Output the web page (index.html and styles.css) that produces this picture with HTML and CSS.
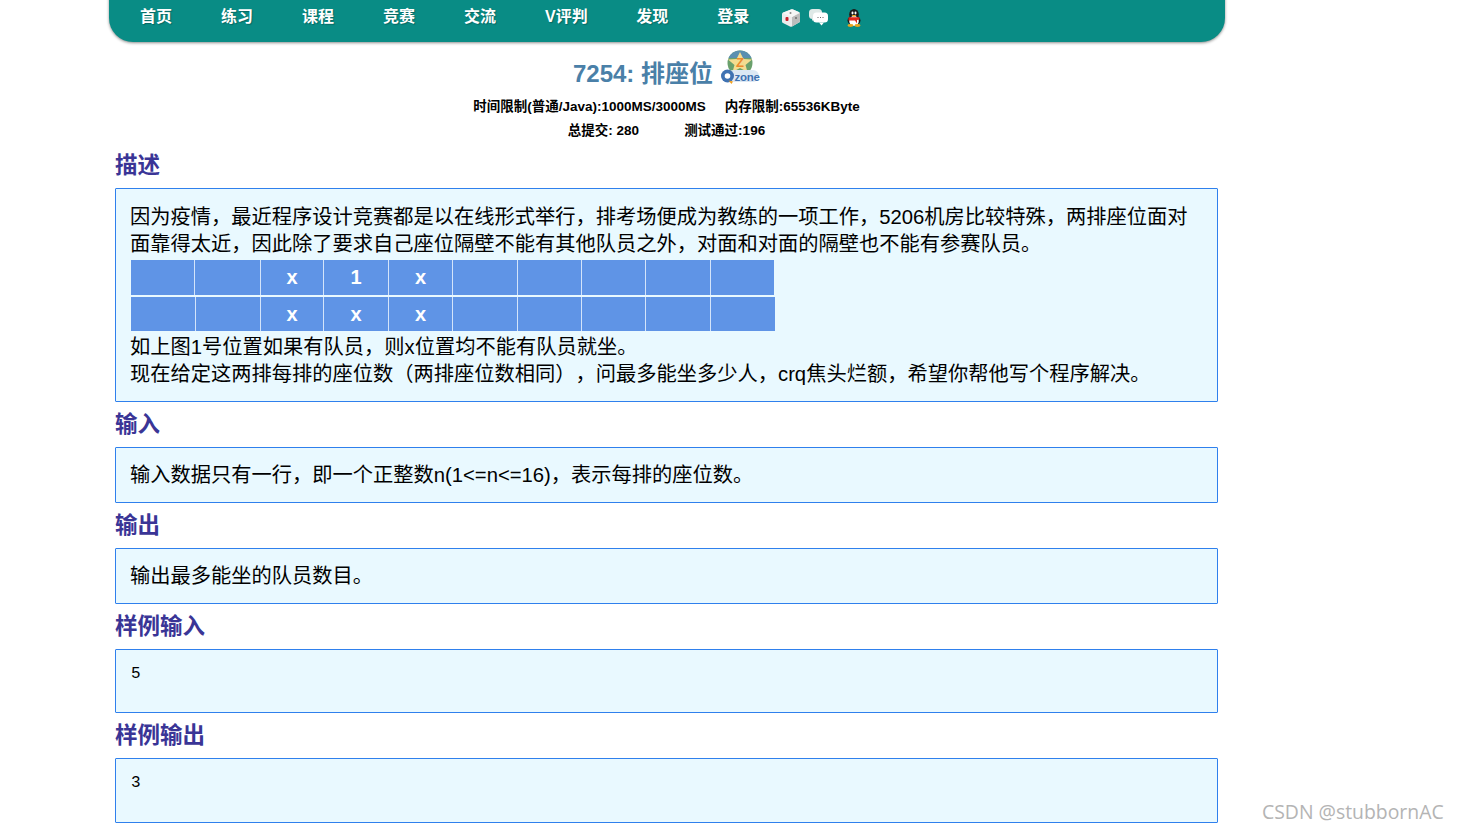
FILE: index.html
```html
<!DOCTYPE html>
<html lang="zh">
<head>
<meta charset="utf-8">
<title>7254: 排座位</title>
<link rel="stylesheet" href="styles.css">
</head>
<body>
<nav class="nav">
  <a class="nav-item">首页</a>
  <a class="nav-item">练习</a>
  <a class="nav-item">课程</a>
  <a class="nav-item">竞赛</a>
  <a class="nav-item">交流</a>
  <a class="nav-item nav-item-v">V评判</a>
  <a class="nav-item">发现</a>
  <a class="nav-item">登录</a>
  <span class="nav-icons">
    <svg class="ico" width="19" height="18" viewBox="0 0 19 18">
      <path d="M1 5 Q1 4 2 3.500L10 .5Q11 0 12 .5L18 3Q19 3.500 19 5V12Q19 13 18 13.500L11 17.500Q10 18 9 17.500L2 14Q1 13.500 1 12.500Z" fill="#ececec"/>
      <path d="M11 8 L19 4V12Q19 13 18 13.500L11 17.500Z" fill="#bdbdbd"/>
      <path d="M1.500 4 10 .5Q11 0 12 .5L18.500 3.500 11 8Z" fill="#f6f6f6"/>
      <rect x="4.500" y="8" width="3" height="4" rx="1" fill="#c8202a"/>
      <circle cx="9.500" cy="4" r="1" fill="#8a8a8a"/>
      <circle cx="15" cy="9" r="1" fill="#707070"/>
    </svg>
    <svg class="ico ico-chat" width="19" height="17" viewBox="0 0 19 17">
      <rect x="0" y="0" width="13" height="10" rx="3.500" fill="#dfe9e7"/>
      <path d="M3 9v3l3-3z" fill="#dfe9e7"/>
      <rect x="4" y="3.500" width="15" height="10" rx="3.500" fill="#fff"/>
      <path d="M10 13.500l2.500 3 2.500-3z" fill="#fff"/>
      <path d="M8.500 8.500h1M11 8.500h1M13.500 8.500h1" stroke="#666" stroke-width="1"/>
    </svg>
    <svg class="ico ico-qq" width="16" height="18" viewBox="0 0 16 18">
      <ellipse cx="8" cy="5.500" rx="4.800" ry="5.500" fill="#1a1a1a"/>
      <ellipse cx="8" cy="11.500" rx="6.500" ry="5" fill="#1a1a1a"/>
      <ellipse cx="8" cy="12" rx="4.800" ry="5" fill="#fff"/>
      <ellipse cx="6.500" cy="4" rx="1" ry="1.400" fill="#fff"/>
      <ellipse cx="9.500" cy="4" rx="1" ry="1.400" fill="#fff"/>
      <path d="M5.500 6h5L8 8z" fill="#f2a81d"/>
      <path d="M2.500 8.200h11v2.300l-2.500.5v3.500L9 11.500H2.500z" fill="#e1271c"/>
      <ellipse cx="4.500" cy="16.500" rx="3" ry="1.400" fill="#e9a51e"/>
      <ellipse cx="11.500" cy="16.500" rx="3" ry="1.400" fill="#e9a51e"/>
    </svg>
  </span>
</nav>

<main class="page">
  <header class="head">
    <h1 class="title">7254: 排座位
      <svg class="qzone" width="40" height="34" viewBox="0 0 40 34">
        <circle cx="20" cy="13" r="12.500" fill="#6aa06c"/>
        <path d="M8.500 8a12.500 12.500 0 0 1 23 0z" fill="#5a8fb0"/>
        <path d="M20 2l3.500 7 8.500.5-6.500 5.500 2 7-7.500-4-7.500 4 2-7-6.500-5.500 8.500-.5z" fill="#f4dc90"/>
        <text class="qzone-z" x="20" y="17">Z</text>
        <rect x="7" y="20" width="32" height="12" rx="6" fill="#dce8f4"/>
        <circle cx="7.500" cy="26" r="6.500" fill="#3f72b2"/>
        <circle cx="7.500" cy="26" r="2.800" fill="#fff"/>
        <path d="M8.500 30.500l3 3.500 1.500-2.500z" fill="#f0a020"/>
        <text class="qzone-t" x="14.500" y="30.500">zone</text>
      </svg>
    </h1>
    <p class="meta"><span class="meta-a">时间限制(普通/Java):1000MS/3000MS</span><span>内存限制:65536KByte</span></p>
    <p class="meta"><span class="meta-b">总提交: 280</span><span>测试通过:196</span></p>
  </header>

  <h2 class="sec">描述</h2>
  <section class="panel panel-main">
    <div>因为疫情&#65292;最近程序设计竞赛都是以在线形式举行&#65292;排考场便成为教练的一项工作&#65292;5206机房比较特殊&#65292;两排座位面对面靠得太近&#65292;因此除了要求自己座位隔壁不能有其他队员之外&#65292;对面和对面的隔壁也不能有参赛队员。</div>
    <div class="seats">
      <div class="row row-a">
        <span class="cell"></span><span class="cell"></span><span class="cell">x</span><span class="cell">1</span><span class="cell">x</span><span class="cell"></span><span class="cell"></span><span class="cell"></span><span class="cell"></span><span class="cell"></span>
      </div>
      <div class="row row-b">
        <span class="cell"></span><span class="cell"></span><span class="cell">x</span><span class="cell">x</span><span class="cell">x</span><span class="cell"></span><span class="cell"></span><span class="cell"></span><span class="cell"></span><span class="cell"></span>
      </div>
    </div>
    <div>如上图1号位置如果有队员&#65292;则x位置均不能有队员就坐。</div>
    <div>现在给定这两排每排的座位数&#65288;两排座位数相同&#65289;&#65292;问最多能坐多少人&#65292;crq焦头烂额&#65292;希望你帮他写个程序解决。</div>
  </section>

  <h2 class="sec">输入</h2>
  <section class="panel">输入数据只有一行&#65292;即一个正整数n(1&lt;=n&lt;=16)&#65292;表示每排的座位数。</section>

  <h2 class="sec">输出</h2>
  <section class="panel">输出最多能坐的队员数目。</section>

  <h2 class="sec">样例输入</h2>
  <section class="panel panel-code"><pre class="code">5</pre></section>

  <h2 class="sec">样例输出</h2>
  <section class="panel panel-code panel-last"><pre class="code">3</pre></section>
</main>

<div class="mark">CSDN @stubbornAC</div>
</body>
</html>
```

FILE: styles.css
```css
html, body {
  margin: 0;
  padding: 0;
  height: 830px;
  overflow: hidden;
  background: #fff;
  color: #000;
  font-family: "Liberation Sans", "Noto Sans CJK SC", sans-serif;
}

.nav {
  display: flex;
  align-items: center;
  box-sizing: border-box;
  width: 1116px;
  height: 72px;
  margin: -30px 0 0 109px;
  padding: 21px 0 0 31px;
  background: #098c85;
  border-radius: 24px;
  box-shadow: 0 1px 3px rgba(0, 0, 0, .45);
  color: #fff;
  font-size: 16px;
  font-weight: bold;
  line-height: 20px;
}

.nav-item {
  margin-right: 49px;
  text-shadow: 1px 1px 1px rgba(0, 0, 0, .25);
}

.nav-item-v { margin-right: 48.5px; }

.nav-icons {
  display: flex;
  align-items: center;
  margin-left: -17px;
  padding-top: 2px;
}

.ico { display: block; }
.ico-chat { margin-left: 9px; }
.ico-qq { margin-left: 18px; }

.page {
  box-sizing: border-box;
  width: 1103px;
  margin-left: 115px;
}

.head {
  text-align: center;
  padding-top: 12px;
}

.title {
  display: flex;
  justify-content: center;
  align-items: flex-end;
  gap: 7px;
  margin: 0 0 5px;
  height: 36px;
  color: #4a80a8;
  font-size: 24px;
  line-height: 32px;
  font-weight: bold;
}

.qzone { display: block; margin-bottom: 6px; }

.qzone-z {
  fill: #ee8a2c;
  font-size: 13px;
  font-weight: bold;
  text-anchor: middle;
}

.qzone-t {
  fill: #3f72b2;
  font-size: 11.5px;
  font-weight: bold;
  letter-spacing: -.3px;
}

.meta {
  margin: 0;
  font-size: 13.5px;
  line-height: 24px;
  font-weight: bold;
}

.meta-a { margin-right: 19px; }
.meta-b { margin-right: 45px; }

.sec {
  margin: 0;
  height: 45px;
  color: #3a3596;
  font-size: 22.5px;
  font-weight: bold;
  line-height: 45px;
}

.panel {
  box-sizing: border-box;
  padding: 13.5px 14px;
  border: 1px solid #2f80ed;
  border-radius: 1px;
  background: #e9f9ff;
  font-size: 20.25px;
  line-height: 27px;
  text-spacing-trim: space-all;
}

.panel-main { padding-top: 14.5px; }

.seats {
  margin: 2px 0 3px 1px;
  color: #fff;
  font-weight: bold;
  font-size: 20px;
}

.row {
  display: grid;
  gap: 1px;
  height: 35px;
  background: #d4e4fa;
}

.row-a {
  width: 643px;
  grid-template-columns: 63px 65px 62px 64px 63px 64px 63px 63px 64px 63px;
}

.row-a .cell { padding-bottom: 1px; }

.row-b {
  width: 644px;
  height: 34px;
  margin-top: 2px;
  grid-template-columns: 64px 64px 62px 64px 63px 64px 63px 63px 64px 64px;
}

.cell {
  display: flex;
  align-items: center;
  justify-content: center;
  background: #5f94e6;
  line-height: 1;
}

.panel-code {
  height: 64px;
  padding: 15px 15px 0;
}

.panel-last { height: 65px; }

.code {
  margin: 0;
  font-family: "Liberation Mono", monospace;
  font-size: 16px;
  line-height: 18px;
}

.mark {
  position: absolute;
  left: 1262px;
  top: 798px;
  color: #b4b4b4;
  font-family: "Open Sans", sans-serif;
  font-size: 19.4px;
  line-height: 28px;
  white-space: nowrap;
}
```
